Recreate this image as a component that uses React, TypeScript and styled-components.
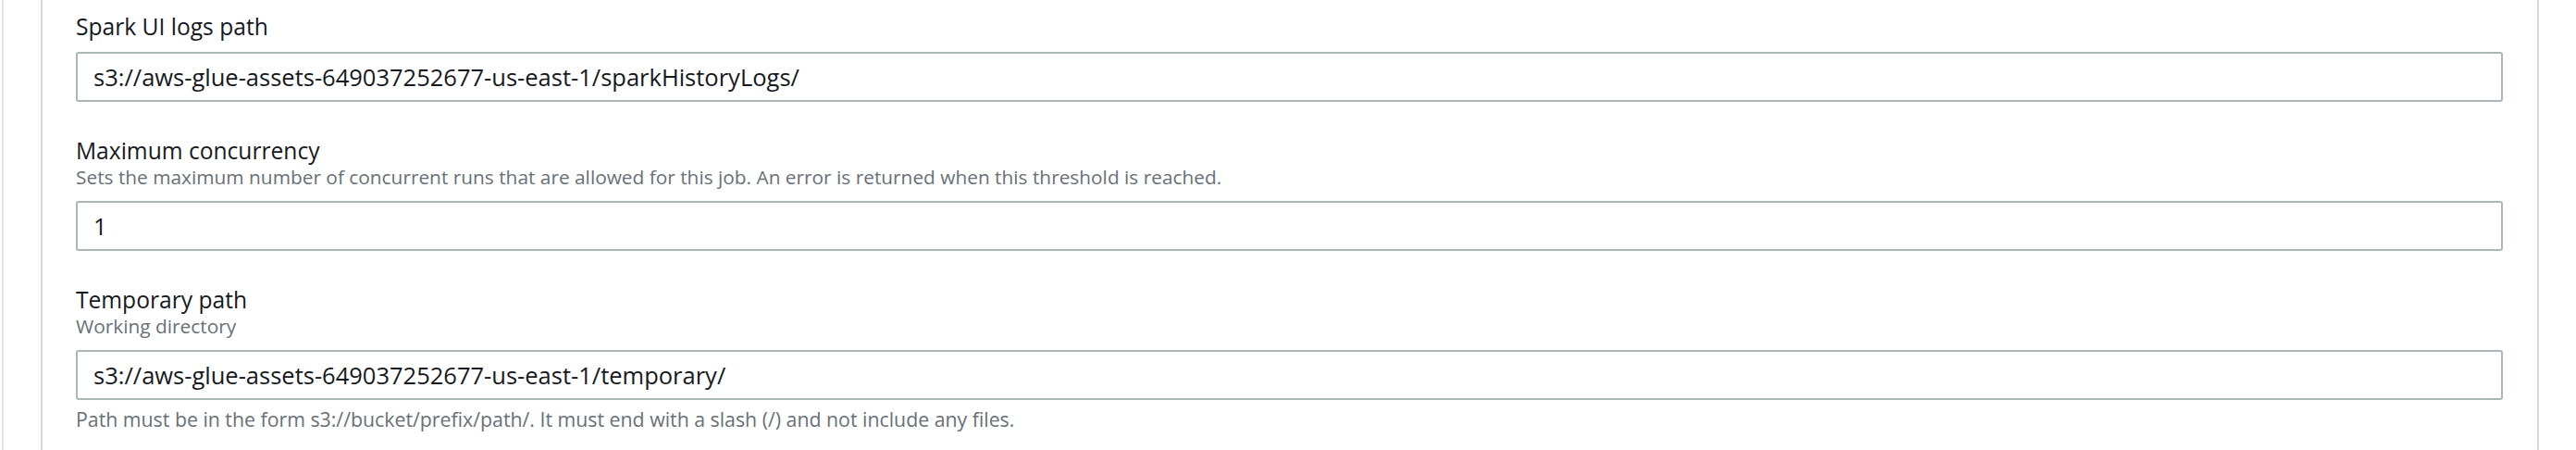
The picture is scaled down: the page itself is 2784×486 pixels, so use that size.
import React from "react";
import styled, { createGlobalStyle } from "styled-components";

const GlobalStyle = createGlobalStyle`
  html, body {
    margin: 0;
    padding: 0;
    background: #ffffff;
  }
  body {
    font-family: "Open Sans", "Noto Sans", Arial, sans-serif;
  }
  * { box-sizing: border-box; }
`;

const Page = styled.div`
  width: 2784px;
  height: 486px;
  overflow: hidden;
  background: #ffffff;
  display: flex;
`;

const OuterFrame = styled.div`
  margin-left: 2px;
  border-left: 2px solid #dfe3e6;
  padding: 0 40px;
  flex: 1;
  display: flex;
`;

const Card = styled.section`
  flex: 1;
  border-left: 2px solid #d5dbdb;
  border-right: 2px solid #d5dbdb;
  background: #ffffff;
  padding: 14px 37px 0 36px;
  display: flex;
  flex-direction: column;
  gap: 38px;
`;

const Field = styled.div`
  display: flex;
  flex-direction: column;
`;

const Label = styled.label`
  font-size: 24.6px;
  line-height: 30px;
  color: #16191f;
  font-weight: 400;
`;

const Description = styled.div`
  font-size: 20.85px;
  line-height: 27px;
  color: #687078;
`;

const Input = styled.input`
  margin-top: 12px;
  width: 100%;
  height: 54px;
  border: 2px solid #aab7b8;
  border-radius: 3px;
  padding: 0 17px;
  font-family: inherit;
  font-size: 25.5px;
  color: #16191f;
  background: #ffffff;
  outline: none;
`;

const Help = styled.div`
  margin-top: 7px;
  font-size: 21.3px;
  line-height: 28px;
  color: #687078;
`;

type FieldProps = {
  label: string;
  description?: string;
  value: string;
  help?: string;
};

const FormField: React.FC<FieldProps> = ({ label, description, value, help }) => (
  <Field>
    <Label>{label}</Label>
    {description && <Description>{description}</Description>}
    <Input defaultValue={value} readOnly />
    {help && <Help>{help}</Help>}
  </Field>
);

export default function App() {
  return (
    <>
      <GlobalStyle />
      <Page>
        <OuterFrame>
          <Card>
            <FormField
              label="Spark UI logs path"
              value="s3://aws-glue-assets-649037252677-us-east-1/sparkHistoryLogs/"
            />
            <FormField
              label="Maximum concurrency"
              description="Sets the maximum number of concurrent runs that are allowed for this job. An error is returned when this threshold is reached."
              value="1"
            />
            <FormField
              label="Temporary path"
              description="Working directory"
              value="s3://aws-glue-assets-649037252677-us-east-1/temporary/"
              help="Path must be in the form s3://bucket/prefix/path/. It must end with a slash (/) and not include any files."
            />
          </Card>
        </OuterFrame>
      </Page>
    </>
  );
}
